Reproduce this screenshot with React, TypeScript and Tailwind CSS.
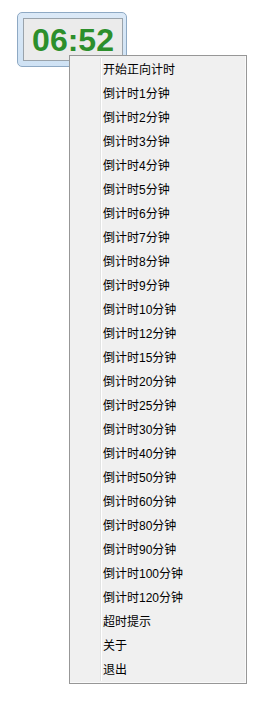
const items = [
  '开始正向计时',
  '倒计时1分钟',
  '倒计时2分钟',
  '倒计时3分钟',
  '倒计时4分钟',
  '倒计时5分钟',
  '倒计时6分钟',
  '倒计时7分钟',
  '倒计时8分钟',
  '倒计时9分钟',
  '倒计时10分钟',
  '倒计时12分钟',
  '倒计时15分钟',
  '倒计时20分钟',
  '倒计时25分钟',
  '倒计时30分钟',
  '倒计时40分钟',
  '倒计时50分钟',
  '倒计时60分钟',
  '倒计时80分钟',
  '倒计时90分钟',
  '倒计时100分钟',
  '倒计时120分钟',
  '超时提示',
  '关于',
  '退出',
]

const App = () => {
  return (
    <div className="relative w-[265px] h-[712px] bg-white font-['Liberation_Sans','Noto_Sans_CJK_SC',sans-serif]">
      {/* Timer window */}
      <div className="absolute left-[17px] top-[12px] w-[110px] h-[55px] rounded-[5px] border border-[#8ea9c4] bg-gradient-to-b from-[#dbe9f7] to-[#cfe2f4] p-[5px]">
        <div className="flex h-[43px] w-[100px] items-center justify-center border border-[#9aa3ab] bg-[#ebebeb]">
          <span className="text-[32px] font-bold leading-none text-[#2c8f2c]">06:52</span>
        </div>
      </div>

      {/* Context menu */}
      <div className="absolute left-[69px] top-[55px] w-[178px] h-[629px] border border-[#979797] bg-[#f0f0f0] p-[2px] shadow-[inset_-1px_-1px_0_#fafafa]">
        <div className="absolute left-[30px] top-[2px] bottom-[2px] w-[2px] border-l border-[#e2e3e3] bg-white" />
        <div className="relative flex flex-col">
          {items.map((label) => (
            <div key={label} className="flex h-[24px] items-center pl-[31px] text-[12px] text-black">
              {label}
            </div>
          ))}
        </div>
      </div>
    </div>
  )
}

export default App
